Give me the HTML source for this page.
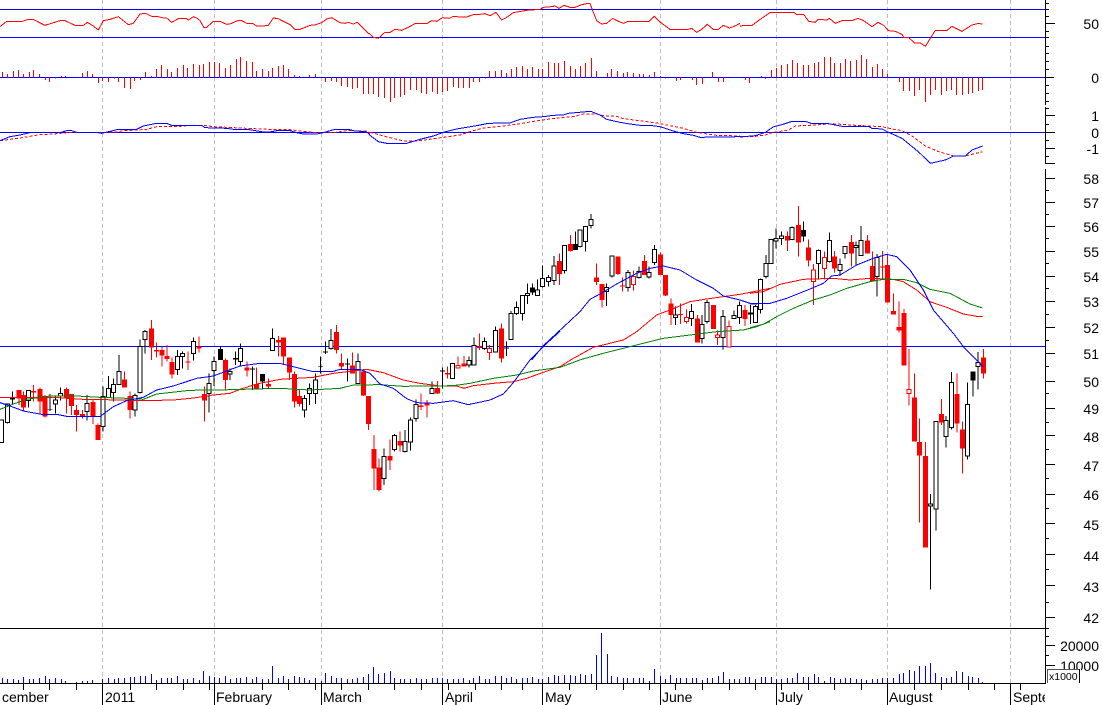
<!DOCTYPE html>
<html><head><meta charset="utf-8"><title>Chart</title>
<style>
html,body{margin:0;padding:0;background:#fff;width:1102px;height:705px;overflow:hidden}
svg{display:block;position:absolute;left:0;top:0}
text{font-family:"Liberation Sans",sans-serif;font-size:14px;fill:#000}
path,polyline,line{shape-rendering:crispEdges}
</style></head><body>
<svg width="1102" height="705" viewBox="0 0 1102 705" xmlns="http://www.w3.org/2000/svg">
<rect width="1102" height="705" fill="#fff"/>
<!-- grid -->
<path d="M102.5 0V683M214.5 0V683M321.5 0V683M442.5 0V683M542.5 0V683M660.5 0V683M776.5 0V683M887.5 0V683M1010.5 0V683" stroke="#bdbdbd" stroke-width="1" stroke-dasharray="4 3" fill="none"/>
<!-- horizontals -->
<path d="M0 9.5H1045M0 37.5H1045M0 77.5H1045M0 132.5H1045M0 346.5H1045" stroke="#0000ff" stroke-width="1" fill="none"/>
<path d="M0 628.5H1045M0 683.5H1045" stroke="#000" stroke-width="1" fill="none"/>

<!-- RSI -->
<g transform="scale(.33333)" stroke="#f00" fill="none" stroke-width="3">
<polyline fill="none" points="0,80 20,64 67,64 85,58 100,58 115,66 135,76 160,68 180,62 195,62 225,76 250,76 262,67 280,78 295,90 310,62 330,58 355,50 385,74 400,70 420,42 437,40 455,49 470,49 490,54 500,54 515,67 535,56 560,56 565,60 580,50 592,55 600,62 612,83 620,82 640,64 660,64 680,73 690,72 715,61 725,62 740,70 758,70 770,78 790,78 805,76 820,54 835,56 850,64 870,74 885,88 900,88 930,76 945,75 965,68 980,57 995,53 1020,68 1035,70 1045,67 1060,72 1072,67 1085,80 1105,100 1110,101"/>
</g>
<g transform="translate(370,0) scale(.33333)" stroke="#f00" fill="none" stroke-width="3">
<polyline points="0,103 10,112 25,115 45,97 60,97 75,88 95,91 115,82 135,71 170,71 185,62 200,64 218,53 238,55 250,49 270,51 290,51 310,44 330,43 345,41 360,47 378,37 395,60 410,52 430,38 470,31 510,28 520,22 545,20 555,18 567,25 582,16 600,22 615,22 635,14 650,11 660,10 668,32 680,62 695,72 710,70 728,55 745,64 760,70 775,64 838,64 853,49 870,66 900,88 955,88 965,85 980,97 995,88 1012,73 1030,88 1045,88 1060,76 1078,84 1095,78 1110,70"/>
</g>
<g transform="translate(732,0) scale(.33333)" stroke="#f00" fill="none" stroke-width="3">
<polyline points="24,79 35,76 60,76 85,58 115,37 185,37 195,44 215,43 230,64 250,67 258,58 285,60 292,55 310,70 330,62 360,62 378,55 395,62 420,80 438,67 455,76 470,92 490,94 510,103 515,112 530,113 548,129 565,129 580,139 610,91 645,91 660,79 690,94 720,75 740,70 752,73"/>
</g>

<!-- Histogram -->
<g transform="scale(.33333)" stroke="#f00" fill="none" stroke-width="3">
<path d="M7 232V216M22 232V222M40 232V213M55 232V210M70 232V222M88 232V216M100 232V210M118 232V222M136 232V240M148 232V246M166 232V236M184 232V228M196 232V228M247 232V219M262 232V213M277 232V222M295 232V249M307 232V243M325 232V246M343 232V236M355 232V246M373 232V264M391 232V267M403 232V243M421 232V240M436 232V216M454 232V228M469 232V207M484 232V195M502 232V207M515 232V216M532 232V204M550 232V195M562 232V204M580 232V192M598 232V195M610 232V192M628 232V186M643 232V186M658 232V189M676 232V204M691 232V195M709 232V177M721 232V171M739 232V183M757 232V186M769 232V213M787 232V207M805 232V213M817 232V204M835 232V198M850 232V195M865 232V207M883 232V225M898 232V228M928 232V225M946 232V222M976 232V246M994 232V243M1009 232V246M1024 232V258M1042 232V261M1057 232V267M1072 232V264M1090 232V282M1105 232V282"/>
</g>
<g transform="translate(370,0) scale(.33333)" stroke="#f00" fill="none" stroke-width="3">
<path d="M10 232V282M25 232V291M43 232V294M61 232V306M73 232V294M91 232V291M103 232V285M121 232V270M139 232V270M154 232V279M169 232V282M187 232V276M202 232V282M217 232V276M232 232V273M250 232V261M265 232V264M280 232V264M298 232V264M310 232V246M328 232V246M346 232V236M358 232V213M376 232V213M394 232V210M409 232V219M424 232V207M439 232V201M457 232V198M472 232V207M487 232V201M505 232V207M517 232V207M535 232V186M553 232V189M565 232V189M583 232V183M601 232V198M616 232V207M631 232V198M646 232V189M664 232V174M679 232V213M712 232V219M724 232V207M742 232V213M760 232V219M772 232V216M790 232V219M808 232V222M820 232V222M838 232V225M853 232V216M871 232V228M886 232V235M919 232V243M931 232V240M967 232V240M979 232V255M997 232V252M1027 232V216M1045 232V246M1060 232V246M1093 232V234"/>
</g>
<g transform="translate(732,0) scale(.33333)" stroke="#f00" fill="none" stroke-width="3">
<path d="M40 232V240M52 232V249M88 232V228M100 232V237M118 232V210M133 232V204M148 232V195M166 232V192M181 232V180M196 232V189M214 232V195M229 232V195M247 232V189M259 232V186M277 232V171M295 232V171M307 232V189M325 232V189M340 232V177M355 232V183M373 232V180M388 232V165M403 232V177M421 232V201M436 232V192M451 232V207M466 232V222M502 232V246M514 232V273M532 232V273M547 232V288M562 232V270M580 232V306M595 232V285M610 232V270M628 232V285M643 232V273M658 232V270M673 232V285M691 232V285M709 232V282M721 232V279M739 232V273M751 232V270"/>
</g>

<!-- MACD -->
<g transform="scale(.33333)" fill="none" stroke-width="3">
<polyline stroke="#f00" stroke-dasharray="9 6" points="0,422 60,414 120,404 160,402 200,398 300,398 350,396 370,392 410,390 440,388 470,380 530,380 560,377 610,376 640,380 700,383 760,386 830,389 870,389 900,393 950,398 1000,398 1040,392 1100,393 1110,400"/>
<polyline stroke="#00f" points="0,422 10,418 30,410 60,405 90,398 180,398 200,392 215,392 230,397 290,397 305,400 330,394 355,388 410,388 430,378 470,370 500,370 515,376 605,376 615,383 680,385 700,388 740,388 760,391 790,396 810,396 830,392 870,392 890,398 910,402 950,402 970,398 1005,388 1045,388 1060,392 1100,396 1110,405"/>
</g>
<g transform="translate(370,0) scale(.33333)" fill="none" stroke-width="3">
<polyline stroke="#f00" stroke-dasharray="9 6" points="0,397 30,405 60,413 100,423 140,423 200,415 270,405 300,395 335,385 400,378 450,371 510,361 570,353 610,350 640,342 680,342 700,347 740,349 760,356 800,361 860,369 900,377 940,385 980,397 1040,406 1110,408"/>
<polyline stroke="#00f" points="0,406 25,425 50,430 110,430 150,418 190,408 220,397 260,387 320,377 350,371 380,369 420,369 450,358 490,352 520,350 550,346 580,345 595,340 650,335 665,335 690,345 710,358 750,367 780,372 810,376 840,376 870,380 910,393 940,401 970,406 990,412 1110,410"/>
</g>
<g transform="translate(732,0) scale(.33333)" fill="none" stroke-width="3">
<polyline stroke="#f00" stroke-dasharray="9 6" points="24,409 70,409 100,405 120,398 170,390 190,378 250,375 300,371 370,376 450,380 480,387 510,392 540,408 580,438 620,455 665,468 700,468 752,455"/>
<polyline stroke="#00f" points="24,411 70,407 100,397 125,380 150,374 180,364 220,364 240,371 290,371 330,379 410,379 420,385 450,387 470,397 510,415 560,456 595,490 640,480 665,468 700,468 720,450 752,438"/>
</g>

<!-- Candles group 1 -->
<g transform="translate(0,310) scale(.33333)" fill="none">
<path stroke="#000" stroke-width="3" d="M22 290V340M38 245V285M85 240V292M150 252V303M166 260V310M182 232V272M261 255V332M309 230V365M325 198V258M341 205V275M357 135V223M405 250V320M420 88V250M435 60V130M532 120V195M548 125V175M580 83V152M627 190V308M642 140V228M661 110V150M690 175V210M707 125V165M722 100V170M757 170V240M788 192V235M818 55V122"/>
<path stroke="#f00" stroke-width="3" d="M57 240V285M71 245V305M100 225V275M120 233V310M135 255V322M199 233V310M214 252V315M230 285V365M247 300V325M279 270V342M294 340V390M374 185V233M390 245V325M454 30V150M469 98V142M486 110V170M501 105V155M516 142V205M564 125V180M597 80V128M613 230V335M677 145V240M741 155V200M770 172V238M805 205V235M835 78V140"/>
<path stroke="#f00" stroke-width="15" d="M57 240V265M71 255V293M100 243V248M120 237V275M135 258V320M199 237V265M214 252V288M230 300V315M247 312V320M279 276V320M294 345V390M374 208V232M390 258V300M454 55V112M469 120V125M486 120V137M501 138V147M516 156V194M564 155V158M597 110V115M613 252V272M677 150V210M741 172V182M770 222V238M805 222V230M835 90V98"/>
<path stroke="#000" stroke-width="15" d="M38 263V268M150 298V300M661 117V150M707 144V148M757 176V178M788 192V215"/>
<path stroke="#000" stroke-width="3" fill="#fff" d="M-1 330h12v68h-12zM16 282h12v56h-12zM79 242h12v30h-12zM160 270h12v12h-12zM176 250h12v8h-12zM255 280h12v25h-12zM303 260h12v90h-12zM319 235h12v27h-12zM335 223h12v25h-12zM351 184h12v40h-12zM399 256h12v44h-12zM414 110h12v138h-12zM429 65h12v23h-12zM526 139h12v39h-12zM542 130h12v9h-12zM574 94h12v36h-12zM621 220h12v30h-12zM636 155h12v27h-12zM684 184h12v8h-12zM716 115h12v40h-12zM812 85h12v37h-12z"/>
</g>
<!-- Candles group 2 -->
<g transform="translate(280,310) scale(.33333)" fill="none">
<path stroke="#000" stroke-width="3" d="M73 255V322M88 220V285M106 190V282M122 140V190M136 95V132M153 57V118M202 145V215M234 130V220M312 415V525M343 372V425M375 360V428M392 322V422M408 268V335M456 215V250M488 172V235M518 160V205M567 140V172M582 82V165M614 82V120M647 50V128M679 95V138M693 3V88"/>
<path stroke="#f00" stroke-width="3" d="M10 82V165M28 143V210M43 185V293M58 240V290M169 45V130M185 130V178M217 128V190M250 180V258M265 258V360M282 375V540M297 445V545M330 388V480M360 365V425M423 250V300M441 270V322M472 213V252M502 170V205M534 140V175M552 138V170M598 70V120M629 105V150M664 40V158"/>
<path stroke="#f00" stroke-width="15" d="M10 82V140M28 143V187M43 192V275M58 258V282M169 66V120M185 159V170M217 167V190M250 185V257M265 258V342M282 417V476M297 472V540M330 438V452M360 393V407M423 287V291M441 281V287M472 234V250M502 189V193M552 160V170M598 110V114M664 55V145"/>
<path stroke="#000" stroke-width="15" d="M122 168V170M136 124V128M202 160V163M488 182V185M679 112V116"/>
<path stroke="#000" stroke-width="3" fill="#fff" d="M67 265h12v35h-12zM82 235h12v15h-12zM100 210h12v40h-12zM147 91h12v24h-12zM228 154h12v66h-12zM306 439h12v66h-12zM337 376h12v42h-12zM369 394h12v31h-12zM386 330h12v66h-12zM402 283h12v42h-12zM450 235h12v15h-12zM512 160h12v45h-12zM561 152h12v13h-12zM576 106h12v59h-12zM608 94h12v22h-12zM641 62h12v64h-12zM687 10h12v78h-12z"/>
<path stroke="#f00" stroke-width="3" fill="#fff" d="M528 166h12v8h-12zM623 116h12v12h-12z"/>
</g>
<!-- Candles group 3 -->
<g transform="translate(490,200) scale(.33333)" fill="none">
<path stroke="#000" stroke-width="3" d="M80 305V345M97 285V362M113 250V312M128 250V285M142 238V287M158 197V262M175 225V260M192 168V255M223 136V220M256 95V150M270 88V142M287 78V155M303 42V85M350 250V318M366 168V232M414 210V275M447 200V235M477 200V235M493 135V195M557 320V375M604 312V378M636 345V430M651 300V370M699 330V448M732 332V357M748 305V372M781 315V372M796 315V367"/>
<path stroke="#f00" stroke-width="3" d="M208 160V255M241 105V155M320 190V255M336 252V322M384 170V225M398 232V275M430 212V272M463 165V225M511 157V225M527 225V288M543 295V375M572 310V372M589 328V370M622 345V428M670 315V387M683 392V435M717 362V441M765 315V378"/>
<path stroke="#f00" stroke-width="15" d="M208 183V222M241 132V153M320 232V246M336 252V300M384 170V222M398 256V260M463 183V225M511 163V225M527 225V287M543 310V345M572 342V345M622 355V428M670 315V387M765 330V357"/>
<path stroke="#000" stroke-width="15" d="M128 262V278M256 132V150M781 337V343"/>
<path stroke="#000" stroke-width="3" fill="#fff" d="M74 322h12v18h-12zM91 287h12v53h-12zM107 280h12v7h-12zM136 270h12v17h-12zM152 235h12v24h-12zM169 232h12v12h-12zM186 198h12v44h-12zM217 136h12v76h-12zM264 90h12v50h-12zM281 80h12v44h-12zM297 58h12v18h-12zM344 262h12v12h-12zM360 168h12v60h-12zM408 218h12v44h-12zM441 215h12v18h-12zM471 218h12v13h-12zM487 148h12v40h-12zM551 345h12v7h-12zM598 335h12v20h-12zM630 373h12v42h-12zM645 308h12v57h-12zM693 350h12v62h-12zM726 347h12v8h-12zM742 317h12v35h-12zM790 320h12v47h-12z"/>
<path stroke="#f00" stroke-width="3" fill="#fff" d="M424 230h12v24h-12zM583 352h12v13h-12zM677 405h12v7h-12zM711 380h12v61h-12z"/>
</g>
<!-- Candles group 4 -->
<g transform="translate(750,190) scale(.33333)" fill="none">
<path stroke="#000" stroke-width="3" d="M32 265V370M48 195V265M63 148V222M78 115V175M95 125V165M126 110V150M160 95V155M205 178V268M238 128V218M270 205V258M285 169V205M318 155V225M333 108V196M381 192V320"/>
<path stroke="#f00" stroke-width="3" d="M112 125V183M145 48V200M176 148V230M190 222V345M223 185V268M254 183V248M304 135V230M352 135V191M367 185V275M398 183V270M413 195V338M431 310V374M447 335V428"/>
<path stroke="#f00" stroke-width="15" d="M112 138V152M145 105V158M176 172V212M254 200V236M304 156V191M352 151V191M367 228V273M398 229V233M413 225V338M431 363V374M447 411V422"/>
<path stroke="#000" stroke-width="15" d="M160 120V140"/>
<path stroke="#000" stroke-width="3" fill="#fff" d="M26 268h12v90h-12zM42 220h12v40h-12zM57 148h12v72h-12zM72 145h12v8h-12zM89 138h12v7h-12zM120 112h12v36h-12zM199 182h12v38h-12zM232 151h12v64h-12zM264 224h12v17h-12zM279 169h12v21h-12zM312 166h12v6h-12zM327 152h12v44h-12zM375 202h12v58h-12z"/>
<path stroke="#f00" stroke-width="3" fill="#fff" d="M184 240h12v35h-12zM217 203h12v32h-12z"/>
</g>
<!-- Candles group 5 -->
<g transform="translate(880,340) scale(.33333)" fill="none">
<path stroke="#000" stroke-width="3" d="M151 462V748M168 244V572M198 228V322M214 96V268M263 127V358M279 94V170M294 36V148"/>
<path stroke="#f00" stroke-width="3" d="M72 -93V77M87 27V197M103 100V305M119 235V548M136 306V623M184 177V255M231 100V278M248 245V400M311 27V116"/>
<path stroke="#f00" stroke-width="15" d="M72 -81V77M103 172V305M119 306V347M136 348V623M184 222V248M231 162V250M248 268V326M311 52V100"/>
<path stroke="#000" stroke-width="15" d="M279 94V122"/>
<path stroke="#000" stroke-width="3" fill="#fff" d="M145 492h12v6h-12zM162 244h12v263h-12zM192 242h12v47h-12zM208 127h12v135h-12zM257 193h12v155h-12zM288 67h12v12h-12z"/>
<path stroke="#f00" stroke-width="3" fill="#fff" d="M81 149h12v11h-12z"/>
</g>

<!-- Moving averages -->
<g transform="translate(0,310) scale(.33333)" fill="none" stroke-width="3">
<polyline stroke="#f00" points="0,262 100,262 160,262 250,268 370,270 430,272 520,270 580,264 640,255 690,250 720,238 770,222 840,208"/>
<polyline stroke="#008000" points="0,298 40,282 80,268 150,258 230,258 300,262 380,265 430,268 470,252 570,241 700,239 760,237 840,235"/>
<polyline stroke="#00f" points="0,278 30,288 70,303 130,314 170,313 200,319 300,320 340,290 380,272 430,262 470,240 520,228 590,205 640,198 680,183 720,168 780,160 840,160"/>
</g>
<g transform="translate(280,310) scale(.33333)" fill="none" stroke-width="3">
<polyline stroke="#f00" points="0,208 50,205 100,202 160,190 260,178 310,188 370,210 420,220 480,228 530,228 552,235 580,227 640,220 700,215 740,205 790,187 840,170"/>
<polyline stroke="#008000" points="0,235 90,240 180,235 220,225 300,224 370,229 520,227 570,220 640,205 710,195 760,183 840,172"/>
<polyline stroke="#00f" points="0,160 60,175 100,185 160,184 180,178 240,178 270,190 300,222 340,235 380,266 410,278 460,280 520,272 565,284 630,270 670,252 700,218 750,150 800,100 840,64"/>
</g>
<g transform="translate(490,200) scale(.33333)" fill="none" stroke-width="3">
<polyline stroke="#f00" points="210,500 245,478 310,442 400,420 440,395 500,345 540,330 600,305 650,297 700,290 750,283 840,265"/>
<polyline stroke="#008000" points="210,502 275,478 340,460 400,445 480,425 520,415 600,405 680,395 760,390 800,380 840,365"/>
<polyline stroke="#00f" points="125,480 160,437 270,335 300,298 330,282 380,252 440,220 480,205 520,198 570,210 620,240 670,265 700,288 750,300 780,310 840,310"/>
</g>
<g transform="translate(750,190) scale(.33333)" fill="none" stroke-width="3">
<polyline stroke="#f00" points="0,310 40,305 90,283 160,268 250,265 300,270 360,265 430,268 460,275 500,300 540,335 590,352 640,372 680,379 698,379"/>
<polyline stroke="#008000" points="0,413 40,403 80,380 130,355 190,330 240,315 290,295 360,275 400,268 460,268 500,278 540,298 600,310 660,342 698,354"/>
<polyline stroke="#00f" points="0,342 60,340 110,325 180,297 220,280 245,258 270,255 320,225 370,205 410,193 440,200 480,240 520,300 550,360 610,430 640,470 680,510 700,530"/>
</g>

<!-- Volume -->
<g transform="translate(0,620) scale(.33333)" fill="none" stroke="#00f" stroke-width="3">
<path d="M7 189V174M22 189V177M40 189V177M55 189V180M70 189V171M88 189V177M100 189V177M118 189V174M136 189V168M148 189V177M166 189V174M184 189V177M196 189V183M229 189V186M247 189V183M262 189V183M277 189V180M307 189V177M325 189V174M343 189V177M355 189V174M373 189V174M391 189V171M403 189V171M421 189V168M436 189V168M454 189V162M469 189V180M484 189V174M502 189V174M514 189V174M532 189V168M550 189V177M562 189V177M580 189V174M598 189V180M610 189V153M628 189V168M643 189V171M658 189V174M676 189V168M691 189V177M709 189V174M721 189V174M739 189V171M757 189V177M769 189V171M787 189V177M805 189V177M817 189V138M835 189V174M850 189V168M865 189V177M883 189V168M898 189V171M913 189V174M928 189V180M946 189V174M964 189V183M976 189V159M994 189V168M1009 189V174M1024 189V174M1042 189V177M1057 189V177M1072 189V174M1090 189V171M1105 189V162"/>
</g>
<g transform="translate(370,620) scale(.33333)" fill="none" stroke="#00f" stroke-width="3">
<path d="M10 189V141M25 189V162M43 189V159M61 189V153M73 189V174M91 189V177M103 189V177M121 189V177M139 189V174M154 189V177M169 189V177M187 189V174M202 189V174M217 189V174M232 189V177M250 189V177M265 189V177M280 189V174M298 189V180M310 189V174M328 189V168M346 189V177M358 189V177M376 189V168M394 189V168M409 189V174M424 189V171M439 189V177M457 189V174M472 189V174M487 189V171M505 189V177M517 189V177M535 189V171M553 189V165M565 189V168M583 189V165M601 189V165M616 189V168M631 189V162M646 189V165M664 189V162M679 189V105M694 189V39M712 189V102M724 189V168M742 189V171M760 189V174M772 189V174M790 189V174M808 189V174M820 189V174M838 189V183M853 189V147M871 189V168M886 189V177M901 189V165M919 189V174M931 189V174M949 189V174M967 189V174M979 189V174M997 189V180M1012 189V174M1027 189V174M1045 189V168M1060 189V156M1078 189V177M1093 189V177"/>
</g>
<g transform="translate(732,620) scale(.33333)" fill="none" stroke="#00f" stroke-width="3">
<path d="M7 189V177M22 189V177M40 189V171M52 189V171M70 189V177M88 189V171M100 189V171M118 189V171M133 189V177M148 189V177M166 189V174M181 189V174M196 189V159M214 189V171M229 189V171M247 189V162M259 189V171M277 189V183M295 189V171M307 189V174M325 189V177M340 189V174M355 189V174M373 189V177M388 189V177M403 189V180M421 189V177M436 189V177M451 189V174M466 189V174M484 189V174M502 189V162M514 189V159M532 189V150M547 189V153M562 189V138M580 189V138M595 189V129M610 189V159M628 189V171M643 189V174M658 189V171M673 189V153M691 189V156M709 189V168M721 189V171M739 189V174M751 189V186"/>
</g>

<!-- Time axis ticks -->
<path stroke="#000" stroke-width="1" fill="none" d="M23.5 683V690M49.5 683V690M76.5 683V690M130.5 683V690M156.5 683V690M183.5 683V690M209.5 683V690M262.5 683V690M288.5 683V690M315.5 683V690M341.5 683V690M368.5 683V690M394.5 683V690M421.5 683V690M448.5 683V690M475.5 683V690M501.5 683V690M522.5 683V690M569.5 683V690M596.5 683V690M623.5 683V690M649.5 683V690M675.5 683V690M702.5 683V690M729.5 683V690M755.5 683V690M781.5 683V690M808.5 683V690M834.5 683V690M861.5 683V690M914.5 683V690M941.5 683V690M968.5 683V690M994.5 683V690M1020.5 683V690"/>
<path stroke="#000" stroke-width="1" fill="none" d="M102.5 683V705M214.5 683V705M321.5 683V705M442.5 683V705M542.5 683V705M660.5 683V705M776.5 683V705M887.5 683V705M1010.5 683V705"/>

<!-- Month labels -->
<text x="2" y="702">cember</text>
<text x="105" y="702">2011</text>
<text x="216" y="702">February</text>
<text x="323" y="702">March</text>
<text x="445" y="702">April</text>
<text x="545" y="702">May</text>
<text x="662" y="702">June</text>
<text x="778" y="702">July</text>
<text x="889" y="702">August</text>
<text x="1013" y="702">September</text>
<rect x="1045" y="0" width="57" height="705" fill="#fff"/>

<!-- Y axis -->
<path stroke="#000" stroke-width="1" fill="none" d="M1045.5 0V105M1045.5 107V164M1045.5 169V684"/>
<path stroke="#000" stroke-width="1" fill="none" d="M1045 3.5H1049M1045 9.5H1049M1045 16.5H1049M1045 31.5H1049M1045 37.5H1049M1045 46.5H1049M1045 53.5H1049M1045 61.5H1049M1045 69.5H1049M1045 85.5H1049M1045 93.5H1049M1045 101.5H1049M1045 108.5H1049M1045 124.5H1049M1045 140.5H1049M1045 156.5H1049M1045 190.5H1049M1045 214.5H1049M1045 238.5H1049M1045 263.5H1049M1045 288.5H1049M1045 314.5H1049M1045 340.5H1049M1045 366.5H1049M1045 393.5H1049M1045 422.5H1049M1045 449.5H1049M1045 478.5H1049M1045 508.5H1049M1045 538.5H1049M1045 569.5H1049M1045 602.5H1049M1045 628.5H1049M1045 636.5H1049M1045 655.5H1049"/>
<path stroke="#000" stroke-width="1" fill="none" d="M1045 23.5H1055M1045 77.5H1054M1045 115.5H1055M1045 132.5H1055M1045 148.5H1055M1045 163.5H1055M1045 178.5H1055M1045 202.5H1055M1045 226.5H1055M1045 251.5H1055M1045 276.5H1055M1045 301.5H1055M1045 327.5H1055M1045 353.5H1055M1045 381.5H1055M1045 408.5H1055M1045 435.5H1055M1045 464.5H1055M1045 494.5H1055M1045 523.5H1055M1045 554.5H1055M1045 585.5H1055M1045 617.5H1055M1045 645.5H1055M1045 665.5H1055"/>

<!-- Y labels -->
<g text-anchor="end">
<text x="1099" y="29">50</text>
<text x="1099" y="83">0</text>
<text x="1099" y="121">1</text>
<text x="1099" y="138">0</text>
<text x="1099" y="154">-1</text>
<text x="1099" y="184">58</text>
<text x="1099" y="208">57</text>
<text x="1099" y="232">56</text>
<text x="1099" y="257">55</text>
<text x="1099" y="282">54</text>
<text x="1099" y="307">53</text>
<text x="1099" y="333">52</text>
<text x="1099" y="359">51</text>
<text x="1099" y="387">50</text>
<text x="1099" y="414">49</text>
<text x="1099" y="442">48</text>
<text x="1099" y="471">47</text>
<text x="1099" y="500">46</text>
<text x="1099" y="530">45</text>
<text x="1099" y="561">44</text>
<text x="1099" y="592">43</text>
<text x="1099" y="623">42</text>
<text x="1099" y="651">20000</text>
<text x="1099" y="671">10000</text>
</g>

<!-- x1000 box -->
<rect x="1047" y="669" width="34" height="14" fill="#fff"/>
<path stroke="#555" stroke-width="1" fill="none" d="M1047.5 683V669.5H1079"/>
<path stroke="#000" stroke-width="1" fill="none" d="M1079.5 669V683"/>
<text x="1049" y="680" style="font-size:10.5px">x1000</text>
</svg>
</body></html>
